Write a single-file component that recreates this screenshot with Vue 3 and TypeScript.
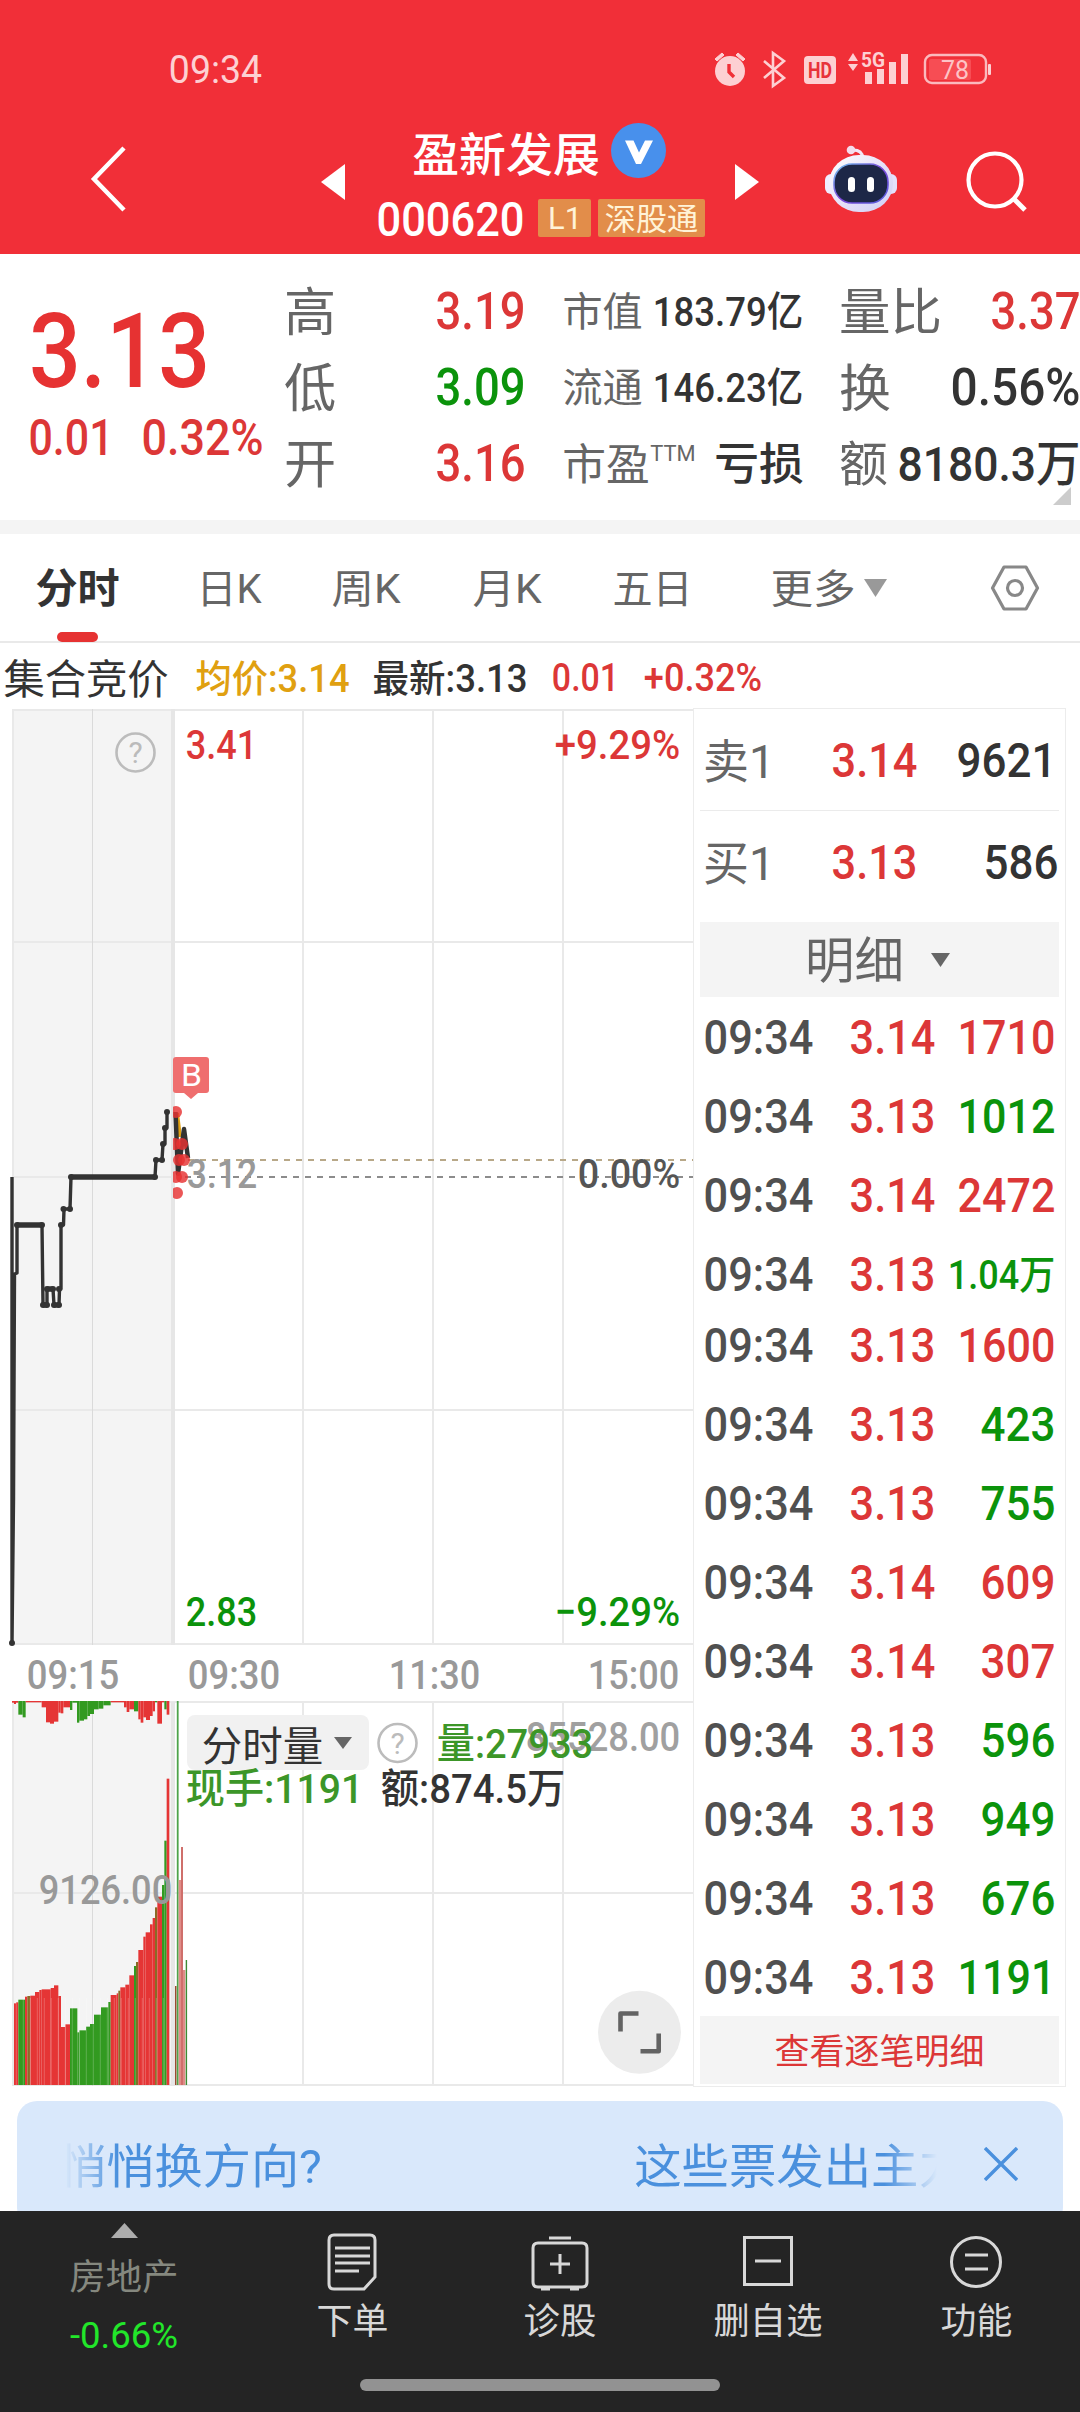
<script setup lang="ts">
import { h, type FunctionalComponent } from 'vue'

interface FitProps { t: string; s: number; w: number; c?: string; b?: number }

/* One line of text condensed or stretched to a given ink width. */
const Fit: FunctionalComponent<FitProps> = (p) => {
  const han = /^[\u4e00-\u9fff]+/.test(p.t)
  const pad = p.s * (han ? 0.04 : 0.03)
  return h('svg', { width: p.w, height: p.s, style: { display: 'block', overflow: 'visible', flex: 'none' } }, [
    h('text', {
      x: -pad,
      y: p.s * (han ? 0.885 : 0.85),
      'font-size': p.s,
      'font-weight': p.b ?? 400,
      fill: p.c ?? 'currentColor',
      textLength: p.w + pad * 2,
      lengthAdjust: 'spacingAndGlyphs',
    }, p.t),
  ])
}
Fit.props = ['t', 's', 'w', 'c', 'b']

const RED = '#dc3737'
const GREEN = '#0b930b'
const DARK = '#333333'
const GRAY = '#666666'

interface Cell { label: string; ls: number; lw: number; value: string; vs: number; vw: number; color: string; sup?: boolean }
const columns: Cell[][] = [
  [
    { label: '高', ls: 52, lw: 48, value: '3.19', vs: 51, vw: 87, color: RED },
    { label: '低', ls: 52, lw: 48, value: '3.09', vs: 51, vw: 87, color: GREEN },
    { label: '开', ls: 52, lw: 48, value: '3.16', vs: 51, vw: 87, color: RED },
  ],
  [
    { label: '市值', ls: 40, lw: 77, value: '183.79亿', vs: 41, vw: 148, color: DARK },
    { label: '流通', ls: 40, lw: 77, value: '146.23亿', vs: 41, vw: 148, color: DARK },
    { label: '市盈', ls: 43, lw: 84, value: '亏损', vs: 44, vw: 86, color: DARK, sup: true },
  ],
  [
    { label: '量比', ls: 50, lw: 99, value: '3.37', vs: 51, vw: 87, color: RED },
    { label: '换', ls: 51, lw: 48, value: '0.56%', vs: 51, vw: 127, color: DARK },
    { label: '额', ls: 48, lw: 45, value: '8180.3万', vs: 49, vw: 180, color: DARK },
  ],
]

const tabs = [
  { t: '日K', w: 62, gap: 80 },
  { t: '周K', w: 66, gap: 73 },
  { t: '月K', w: 66, gap: 75 },
  { t: '五日', w: 77, gap: 74 },
  { t: '更多', w: 82, gap: 81 },
]

const trades: [string, string, number][][] = [
  [['3.14', '1710', 0], ['3.13', '1012', 1], ['3.14', '2472', 0], ['3.13', '1.04万', 1]],
  [
    ['3.13', '1600', 0], ['3.13', '423', 1], ['3.13', '755', 1], ['3.14', '609', 0], ['3.14', '307', 0],
    ['3.13', '596', 1], ['3.13', '949', 1], ['3.13', '676', 1], ['3.13', '1191', 1],
  ],
]
const volWidth = (v: string) => (v.includes('万') ? 105 : v.length === 4 ? 95 : 72)

/* Auction bars: start, end, level and side, in thirds of a pixel. */
type Bar = [number, number, number, 'r' | 'g' | 'm']
const matched: Bar[] = [
  [42, 48, 970, 'r'], [48, 55, 967, 'r'], [55, 75, 959, 'g'], [75, 82, 950, 'r'], [82, 91, 948, 'm'], [91, 105, 947, 'r'],
  [105, 118, 936, 'r'], [118, 125, 930, 'r'], [125, 152, 928, 'r'], [152, 162, 924, 'r'], [162, 175, 916, 'r'],
  [175, 183, 948, 'r'], [183, 196, 1041, 'r'], [196, 210, 1033, 'r'], [210, 232, 985, 'g'], [232, 238, 1057, 'g'],
  [238, 258, 1051, 'g'], [258, 270, 1040, 'g'], [270, 282, 1032, 'g'], [282, 303, 1004, 'g'], [303, 325, 982, 'g'],
  [325, 332, 966, 'g'], [332, 350, 945, 'r'], [350, 355, 940, 'r'], [355, 361, 932, 'm'], [361, 376, 922, 'r'],
  [376, 388, 914, 'r'], [388, 402, 886, 'r'], [402, 408, 858, 'g'], [408, 415, 846, 'm'], [415, 430, 810, 'r'],
  [430, 437, 770, 'r'], [437, 450, 757, 'r'], [450, 458, 733, 'r'], [458, 465, 714, 'r'], [465, 472, 682, 'm'],
  [472, 486, 650, 'r'], [486, 493, 615, 'g'], [493, 500, 482, 'g'], [500, 508, 296, 'r'],
]
const unmatched: Bar[] = [
  [36, 42, 68, 'r'], [42, 48, 72, 'r'], [48, 55, 68, 'r'], [55, 68, 104, 'g'], [68, 77, 112, 'g'], [77, 125, 67, 'r'],
  [125, 138, 82, 'r'], [138, 150, 127, 'r'], [150, 162, 131, 'r'], [162, 175, 125, 'r'], [175, 182, 98, 'r'],
  [182, 190, 100, 'r'], [190, 210, 82, 'r'], [210, 217, 90, 'g'], [217, 231, 68, 'g'], [231, 238, 128, 'g'],
  [238, 252, 122, 'g'], [252, 262, 118, 'g'], [262, 270, 108, 'g'], [270, 282, 102, 'g'], [282, 296, 88, 'g'],
  [296, 310, 86, 'g'], [310, 332, 76, 'g'], [332, 372, 67, 'r'], [372, 380, 82, 'r'], [380, 388, 96, 'r'],
  [388, 402, 88, 'r'], [402, 415, 94, 'g'], [415, 422, 118, 'r'], [422, 430, 128, 'r'], [430, 438, 112, 'r'],
  [438, 450, 120, 'r'], [450, 458, 108, 'r'], [458, 465, 94, 'r'], [465, 472, 67, 'g'], [472, 486, 131, 'r'],
  [486, 493, 67, 'r'], [493, 500, 88, 'g'], [500, 508, 104, 'r'],
]
const fills = { r: '#e53535', g: '#329a20', m: '#8a6a26' }
const Y0 = 1680
const rowsOf = (bars: Bar[], up: boolean) => bars.map(([a, b, y, k]) => ({
  x: a / 3,
  w: (b - a) / 3,
  y: up ? Y0 + y / 3 : 1701,
  h: up ? 2085 - (Y0 + y / 3) : Y0 + y / 3 - 1701,
  f: fills[k],
}))
const bars = [...rowsOf(matched, true), ...rowsOf(unmatched, false)]
const seams = Array.from({ length: 22 }, (_, i) => 16.3 + i * 7)

const auction: [number, number][] = [
  [17, 1225], [42, 1225], [43, 1305], [47, 1305], [47, 1289], [53, 1289], [54, 1305], [59, 1305], [59, 1289], [61, 1225],
  [63.5, 1209], [70, 1209], [71, 1177], [155, 1177], [156, 1160], [162, 1160], [163, 1144], [165, 1128], [167, 1112],
]
const stepLine = '12,1177 12,1400 12,1643 13.5,1500 14.5,1274 17,1273 17,1225 42,1225 43,1305 47,1305 47,1289 53,1289 54,1305 59,1305 59.5,1289 61,1289 61,1225 63.5,1225 64,1209 70,1209 71,1177 155,1177 156,1160 162,1160 163,1144 165,1144 165,1128 167,1128 167,1112'
const deals = [[176, 1112], [175, 1144], [182, 1144], [179, 1160], [184, 1160], [176, 1177], [182, 1177], [177, 1193]]

interface Label { t: string; x: number; y: number; s: number; w: number; c: string; b: number }
const L = (t: string, x: number, x2: number, yc: number, s: number, c: string, b = 500): Label => ({
  t, s, c, b, x: x - s * 0.03, y: yc + s * 0.355, w: x2 - x + s * 0.06,
})
const labels: Label[] = [
  L('3.41', 187, 256, 744, 41, RED), L('+9.29%', 556, 679, 744, 41, RED),
  L('2.83', 187, 256, 1611, 41, GREEN), L('−9.29%', 556, 679, 1611, 41, GREEN),
  L('3.12', 188, 256, 1173, 41, '#999'), L('0.00%', 579, 679, 1173, 41, '#555'),
  L('09:15', 28, 118, 1674, 41, '#999'), L('09:30', 189, 279, 1674, 41, '#999'),
  L('11:30', 390, 479, 1674, 41, '#999'), L('15:00', 589, 678, 1674, 41, '#999'),
  L('85528.00', 527, 679, 1736, 41, '#a0a0a0'), L('9126.00', 40, 171, 1889, 41, '#999'),
  L('分时量', 203, 322, 1746, 41, DARK, 400), L('量:27933', 438, 592, 1743, 41, '#3c9628'),
  L('现手:1191', 187, 362, 1788, 41, '#3c9628'), L('额:874.5万', 382, 564, 1788, 41, DARK),
]
</script>

<template>
  <div class="screen">
    <header class="top">
      <div class="status">
        <Fit t="09:34" :s="38" :w="91" />
        <svg class="sysicons" width="280" height="40" viewBox="713 50 280 40">
          <g fill="#fdd0d3">
            <circle cx="730" cy="71" r="15" />
            <path d="M715 59l7-6 2 2-7 6zM745 59l-7-6-2 2 7 6z" stroke="#fdd0d3" />
            <rect x="804" y="56" width="32" height="28" rx="4" />
            <path d="M848 61l5-8 5 8zM848 64l5 7 5-7z" />
            <rect x="865" y="72" width="7" height="12" /><rect x="877" y="69" width="7" height="15" />
            <rect x="889" y="62" width="7" height="22" /><rect x="901" y="54" width="7" height="30" />
            <rect x="988" y="64" width="3" height="11" rx="1" />
          </g>
          <path d="M729 64v8l5 5" fill="none" stroke="#f03038" stroke-width="3.4" />
          <path d="M764 61l20 17-11 8V53l11 8-20 17" fill="none" stroke="#fdd0d3" stroke-width="2.6" />
          <rect x="925" y="55" width="61" height="28" rx="7" fill="none" stroke="#fbb9bd" stroke-width="2.4" />
          <rect x="929" y="59" width="42" height="21" rx="2" fill="#f74d54" />
          <text x="808" y="78" font-size="22" font-weight="700" fill="#e8323a" textLength="24" lengthAdjust="spacingAndGlyphs">HD</text>
          <text x="861" y="67" font-size="20" font-weight="700" fill="#fdd0d3" textLength="24" lengthAdjust="spacingAndGlyphs">5G</text>
          <text x="941" y="79" font-size="25" fill="#fdc4c7" textLength="28" lengthAdjust="spacingAndGlyphs">78</text>
        </svg>
      </div>
      <div class="titlebar">
        <svg class="back" width="40" height="70" viewBox="0 0 40 70"><path d="M36 4L6 35l30 31" fill="none" stroke="#fff" stroke-width="4.5" /></svg>
        <svg class="prev" width="24" height="36"><path d="M24 0v36L0 18z" fill="#fff" /></svg>
        <div class="name">
          <div class="line1">
            <Fit t="盈新发展" :s="46" :w="184" :b="500" />
            <svg width="55" height="55" viewBox="0 0 55 55"><circle cx="27.500" cy="27.500" r="27.500" fill="#4890ec" /><path d="M14 17.500h8.500l5.500 12L34 17.500h8L30 41h-5z" fill="#fff" /></svg>
          </div>
          <div class="line2">
            <Fit t="000620" :s="49" :w="145" :b="500" />
            <span class="tag l1"><Fit t="L1" :s="32" :w="32" /></span>
            <span class="tag"><Fit t="深股通" :s="31" :w="91" /></span>
          </div>
        </div>
        <svg class="next" width="24" height="36"><path d="M0 0v36l24-18z" fill="#fff" /></svg>
        <svg class="robot" width="72" height="68" viewBox="0 0 72 68">
          <defs>
            <linearGradient id="shell" x1="0" y1="0" x2="1" y2="1"><stop offset="0" stop-color="#fff" /><stop offset=".55" stop-color="#e4dff8" /><stop offset="1" stop-color="#cfd0f6" /></linearGradient>
            <linearGradient id="rim" x1="0" y1="0" x2="1" y2="1"><stop offset="0" stop-color="#6fc6f0" /><stop offset=".5" stop-color="#7b45d8" /><stop offset="1" stop-color="#5560dd" /></linearGradient>
          </defs>
          <path d="M26 5q11-1 12 8" fill="none" stroke="#f3e6f7" stroke-width="3" /><circle cx="26" cy="5" r="4.300" fill="#f4dcec" />
          <rect x="0" y="29" width="13" height="20" rx="6" fill="#f0edff" /><rect x="59" y="29" width="13" height="20" rx="6" fill="#e4e0fb" />
          <rect x="4" y="10" width="64" height="57" rx="30" fill="url(#shell)" />
          <rect x="9" y="19" width="54" height="39" rx="18" fill="#1d2747" stroke="url(#rim)" stroke-width="1.600" />
          <rect x="23" y="32" width="7" height="15" rx="3.500" fill="#fff" /><rect x="42" y="32" width="7" height="15" rx="3.500" fill="#fff" />
        </svg>
        <svg class="search" width="62" height="62" viewBox="0 0 62 62"><circle cx="29" cy="29" r="26.500" fill="none" stroke="#fff" stroke-width="4.200" /><path d="M47 47l12 12" stroke="#fff" stroke-width="5" /></svg>
      </div>
    </header>

    <section class="quote">
      <div class="last">
        <Fit t="3.13" :s="103" :w="175" :b="500" c="#e63232" />
        <div class="chg"><Fit t="0.01" :s="50" :w="82" :b="500" :c="RED" /><Fit t="0.32%" :s="50" :w="119" :b="500" :c="RED" /></div>
      </div>
      <div v-for="(col, i) in columns" :key="i" class="col">
        <div v-for="c in col" :key="c.label" class="cell">
          <div class="lab">
            <Fit :t="c.label" :s="c.ls" :w="c.lw" :c="GRAY" />
            <Fit v-if="c.sup" class="sup" t="TTM" :s="22" :w="44" :c="GRAY" />
          </div>
          <Fit :t="c.value" :s="c.vs" :w="c.vw" :c="c.color" :b="500" />
        </div>
      </div>
      <svg class="corner" width="18" height="18"><path d="M18 0v18H0z" fill="#ccc" /></svg>
    </section>

    <nav class="tabs">
      <div class="on"><Fit t="分时" :s="41" :w="81" :b="700" :c="DARK" /></div>
      <div v-for="t in tabs" :key="t.t" :style="{ marginLeft: t.gap + 'px' }"><Fit :t="t.t" :s="40" :w="t.w" :c="GRAY" /></div>
      <svg class="more" width="23" height="18"><path d="M0 0h23L11.500 18z" fill="#999" /></svg>
      <svg class="hex" width="50" height="46" viewBox="0 0 50 46"><path d="M14 2h22l11.500 21L36 44H14L2.500 23z" fill="none" stroke="#888" stroke-width="3.200" stroke-linejoin="round" /><circle cx="25" cy="23" r="7.500" fill="none" stroke="#888" stroke-width="3.200" /></svg>
    </nav>

    <main class="body">
      <div class="left">
        <div class="info">
          <Fit t="集合竞价" :s="41" :w="162" :c="DARK" />
          <Fit class="num" t="均价:3.14" :s="38" :w="151" c="#e0a010" :b="500" />
          <Fit class="num" t="最新:3.13" :s="38" :w="152" :c="DARK" :b="500" />
          <Fit t="0.01" :s="38" :w="65" :c="RED" :b="500" />
          <Fit t="+0.32%" :s="38" :w="116" :c="RED" :b="500" />
        </div>
        <svg class="chart" width="693" height="1379" viewBox="0 709 693 1379">
          <defs><clipPath id="live"><rect x="173" y="1000" width="60" height="300" /></clipPath></defs>
          <rect x="13" y="710" width="160" height="935" fill="#f4f4f4" />
          <rect x="13" y="1702" width="160" height="384" fill="#f4f4f4" />
          <g stroke="#e9e9e9" stroke-width="2">
            <path d="M13 710H693M13 942H693M13 1177H173M13 1410H693M13 1644H693M13 1702H693M13 1893H693M13 2085H693" />
            <path d="M13 709V1645M13 1702V2086M303 709V1645M433 709V1645M563 709V1645M303 1702V2086M433 1702V2086M563 1702V2086" />
            <path d="M173 709V1645M173 1702V2086" stroke="#e6e6e6" stroke-width="4" />
            <path d="M92.500 709V1645M92.500 1702V2086" stroke="#dadada" stroke-width="1" />
          </g>
          <rect v-for="(b, i) in bars" :key="i" :x="b.x" :y="b.y" :width="b.w" :height="b.h" :fill="b.f" />
          <path v-for="x in seams" :key="x" :d="`M${x} 2085V1998`" stroke="#fff" stroke-opacity=".22" stroke-width="1" />
          <rect x="175" y="1986" width="1.500" height="99" fill="#9a4a30" /><rect x="176.800" y="1701" width="1.800" height="384" fill="#4da34a" />
          <rect x="178.700" y="1880" width="2.300" height="205" fill="#e08c88" /><rect x="181" y="1847" width="2" height="238" fill="#cf6f6b" />
          <rect x="183" y="1970" width="2.300" height="115" fill="#e08c88" /><rect x="185.700" y="1960" width="1.400" height="125" fill="#3e8c34" />

          <path d="M188 1160H693" stroke="#b8a888" stroke-width="1.800" stroke-dasharray="6 6" />
          <path d="M185 1177H693" stroke="#8c8c8c" stroke-width="1.800" stroke-dasharray="6 6" />
          <polyline :points="stepLine" fill="none" stroke="#333" stroke-width="3.400" stroke-linejoin="round" />
          <path d="M71 1177h84M17 1225h25M43 1305h4M54 1305h5M47 1289h6" stroke="#333" stroke-width="5.500" />
          <circle v-for="(p, i) in auction" :key="'a' + i" :cx="p[0]" :cy="p[1]" r="3" fill="#333" />
          <circle cx="12" cy="1643" r="3" fill="#333" />
          <rect x="187" y="1715" width="182" height="55" rx="8" fill="#f1f1f1" />
          <path d="M334 1737h18l-9 12z" fill="#666" />
          <text v-for="l in labels" :key="l.t" :x="l.x" :y="l.y" :font-size="l.s" :font-weight="l.b" :fill="l.c" :textLength="l.w" lengthAdjust="spacingAndGlyphs">{{ l.t }}</text>
          <g clip-path="url(#live)">
            <path d="M177 1113L180 1137" stroke="#e0a010" stroke-width="4" />
            <path d="M175.500 1112L178 1174L184 1129L188 1158" fill="none" stroke="#333" stroke-width="4.500" stroke-linejoin="round" />
            <circle v-for="(p, i) in deals" :key="'d' + i" :cx="p[0]" :cy="p[1]" r="6" fill="#e63232" fill-opacity=".82" />
          </g>
          <path d="M176 1057h30a3 3 0 0 1 3 3v30a3 3 0 0 1-3 3h-8l-7 6-7-6h-8a3 3 0 0 1-3-3v-30a3 3 0 0 1 3-3z" fill="#ef6e6e" />
          <text x="181" y="1086" font-size="31" fill="#fff" textLength="21" lengthAdjust="spacingAndGlyphs">B</text>
          <g fill="none" stroke="#bcbcbc" stroke-width="2.600"><circle cx="135.500" cy="752.500" r="19" /><circle cx="397.500" cy="1743" r="19" /></g>
          <text x="135.500" y="763" font-size="30" text-anchor="middle" fill="#bbb">?</text>
          <text x="397.500" y="1753.500" font-size="30" text-anchor="middle" fill="#bbb">?</text>
          <circle cx="639.500" cy="2032.300" r="41.500" fill="#ececec" />
          <path d="M620.500 2031.500v-18H638.500M658.700 2033.500v17.800H640.500" fill="none" stroke="#636363" stroke-width="4.600" stroke-linejoin="round" />
        </svg>
      </div>

      <aside class="book">
        <div class="level"><Fit t="卖1" :s="47" :w="68" :c="GRAY" /><Fit class="p" t="3.14" :s="48" :w="83" :c="RED" :b="500" /><Fit class="v" t="9621" :s="48" :w="97" :c="DARK" :b="500" /></div>
        <div class="level second"><Fit t="买1" :s="47" :w="68" :c="GRAY" /><Fit class="p" t="3.13" :s="48" :w="83" :c="RED" :b="500" /><Fit class="v" t="586" :s="48" :w="72" :c="DARK" :b="500" /></div>
        <div class="mode"><Fit t="明细" :s="49" :w="95" :c="GRAY" /><svg width="19" height="14"><path d="M0 0h19l-9.500 14z" fill="#666" /></svg></div>
        <div v-for="(g, i) in trades" :key="i" class="group">
          <div v-for="(r, j) in g" :key="j" class="trade">
            <Fit t="09:34" :s="48" :w="107" c="#505050" :b="500" />
            <Fit class="tp" :t="r[0]" :s="48" :w="83" :c="RED" :b="500" />
            <Fit class="v" :class="{ wan: r[1].includes('万') }" :t="r[1]" :s="r[1].includes('万') ? 40 : 48" :w="volWidth(r[1])" :c="r[2] ? GREEN : RED" :b="500" />
          </div>
        </div>
        <div class="all"><Fit t="查看逐笔明细" :s="35" :w="207" :c="RED" /></div>
      </aside>
    </main>

    <div class="adwrap">
      <div class="ad">
        <div class="marquee"><Fit t="悄悄换方向?" :s="47" :w="260" /><Fit t="这些票发出主力" :s="47" :w="328" /></div>
        <svg width="34" height="34"><path d="M1 1l32 32M33 1L1 33" stroke="#4a90dd" stroke-width="3.400" /></svg>
      </div>
    </div>

    <footer class="dock">
      <div class="items">
        <div class="sector">
          <svg width="27" height="15"><path d="M0 15h27L13.500 0z" fill="#adadad" /></svg>
          <Fit class="nm" t="房地产" :s="36" :w="106" c="#85887f" />
          <Fit class="pc" t="-0.66%" :s="37" :w="106" c="#22e62a" />
        </div>
        <div class="item">
          <svg width="60" height="60" viewBox="0 0 60 60"><path d="M12 4h36q5 0 5 5v37l-11 12H12q-5 0-5-5V9q0-5 5-5zM13 17h35M13 25h35M13 32h35M13 40h24" /></svg>
          <Fit t="下单" :s="36" :w="69" />
        </div>
        <div class="item">
          <svg width="60" height="60" viewBox="0 0 60 60"><path d="M8 12h44q5 0 5 5v34q0 5-5 5H8q-5 0-5-5V17q0-5 5-5zM19 7h22M30 23v20M20 33h20M11 58h9M40 58h9" /></svg>
          <Fit t="诊股" :s="36" :w="70" />
        </div>
        <div class="item">
          <svg width="60" height="60" viewBox="0 0 60 60"><path d="M6.500 6.500h47v47h-47zM17 30h26" /></svg>
          <Fit t="删自选" :s="36" :w="106" />
        </div>
        <div class="item">
          <svg width="60" height="60" viewBox="0 0 60 60"><circle cx="30" cy="31" r="24.500" /><path d="M19 24h23M19 38h23" /></svg>
          <Fit t="功能" :s="36" :w="69" />
        </div>
      </div>
      <div class="home"></div>
    </footer>
  </div>
</template>

<style>
body { margin: 0; background: #fff; }
</style>

<style scoped>
.screen { width: 1080px; height: 2412px; display: flex; flex-direction: column; overflow: hidden; background: #fff; font-family: Roboto, "Noto Sans CJK SC", sans-serif; }
.screen > * { flex: none; }
svg { display: block; flex: none; }
.top { height: 254px; background: #f12f38; color: #fff; display: flex; flex-direction: column; }
.status { display: flex; align-items: center; height: 40px; margin-top: 50px; padding-left: 170px; color: #fdd0d3; }
.sysicons { margin-left: 452px; }
.titlebar { display: flex; height: 164px; }
.back { margin: 54px 0 0 88px; }
.prev { margin: 74px 0 0 193px; }
.name { display: flex; flex-direction: column; width: 327px; margin-left: 33px; }
.line1 { display: flex; align-items: center; height: 55px; margin-top: 33px; padding-left: 36px; gap: 13px; }
.line1 > :first-child { margin-top: 4px; }
.line2 { display: flex; align-items: center; height: 40px; margin-top: 20px; }
.tag { display: flex; align-items: center; justify-content: center; width: 107px; height: 38px; margin-left: 7px; background: #e28d4a; border-radius: 2px; color: #fff3d8; }
.tag.l1 { width: 53px; margin-left: 15px; }
.next { margin: 74px 0 0 30px; }
.robot { margin: 55px 0 0 66px; }
.search { margin: 61px 0 0 69px; }

.quote { position: relative; display: flex; height: 247px; padding-top: 19px; border-bottom: 14px solid #f4f4f4; }
.last { width: 286px; padding: 26px 0 0 32px; box-sizing: border-box; }
.chg { display: flex; gap: 31px; margin: 10px 0 0 -2px; }
.col { width: 238px; margin-right: 39.500px; }
.cell { display: flex; align-items: center; justify-content: space-between; height: 76px; }
.lab { display: flex; align-items: center; }
.sup { margin: -20px 0 0 3px; }
.col:nth-of-type(4) { margin-right: 0; }
.corner { position: absolute; right: 9px; bottom: 15px; }

.tabs { display: flex; align-items: center; height: 109px; padding-left: 37px; border-bottom: 2px solid #e9e9e9; box-sizing: border-box; }
.on { position: relative; }
.on::after { content: ''; position: absolute; left: 20px; bottom: -34px; width: 41px; height: 10px; border-radius: 5px; background: #e63232; }
.more { margin-left: 10px; }
.hex { margin-left: 103px; }

.body { display: flex; height: 1445px; }
.left { width: 693px; }
.info { display: flex; align-items: center; height: 66px; padding: 4px 0 0 5px; box-sizing: border-box; width: 780px; }
.info > *:nth-child(2) { margin-left: 30px; }
.info > *:nth-child(3) { margin-left: 26px; }
.info > *:nth-child(4) { margin-left: 27px; }
.info > *:nth-child(5) { margin-left: 27px; }
.num { margin-top: -2px; }
.book { width: 373px; height: 1379px; margin-top: 65px; padding: 0 6px; box-sizing: border-box; border: 1px solid #ececec; display: flex; flex-direction: column; }
.book > * { flex: none; }
.level { display: flex; align-items: center; height: 102px; padding: 0 4px 0 5px; box-sizing: border-box; border-bottom: 1px solid #ebebeb; }
.second { height: 99px; border-bottom: 0; padding-right: 2px; padding-top: 2px; }
.p { margin-left: 60px; }
.tp { margin-left: 39px; }
.v { margin-left: auto; }
.wan { margin-top: 3px; }
.mode { display: flex; align-items: center; justify-content: center; gap: 29px; height: 75px; margin-top: 12px; padding-right: 3px; background: #f4f4f4; }
.group + .group { margin-top: -8px; }
.group { padding: 0 5px 0 5px; }
.trade { display: flex; align-items: center; height: 79px; }
.all { display: flex; align-items: center; justify-content: center; height: 68px; margin-top: auto; margin-bottom: 2px; background: #f4f4f4; }

.adwrap { height: 123px; padding: 13px 17px 0; box-sizing: border-box; overflow: hidden; }
.ad { display: flex; align-items: center; height: 126px; padding: 0 45px 0 48px; border-radius: 20px; background: #d9e8fb; color: #4a90dd; box-sizing: border-box; }
.ad > svg { margin: -1px 0 0 47px; }
.marquee { display: flex; width: 873px; gap: 316px; height: 60px; align-items: center; overflow: hidden; -webkit-mask-image: linear-gradient(90deg, transparent, #000 6%, #000 94%, transparent); mask-image: linear-gradient(90deg, transparent, #000 6%, #000 94%, transparent); }
.marquee > *:first-child { margin-left: -5px; }

.dock { height: 201px; background: #242424; color: #d8d8d8; }
.items { display: flex; height: 168px; }
.sector { width: 248px; display: flex; flex-direction: column; align-items: center; padding-top: 12px; box-sizing: border-box; }
.nm { margin-top: 20px; }
.pc { margin-top: 23px; }
.item { width: 208px; display: flex; flex-direction: column; align-items: center; padding-top: 20px; box-sizing: border-box; }
.item > svg:first-child { fill: none; stroke: #d8d8d8; stroke-width: 3; margin-bottom: 11px; }
.home { width: 360px; height: 12px; margin: 0 auto; border-radius: 6px; background: #929292; }
</style>
